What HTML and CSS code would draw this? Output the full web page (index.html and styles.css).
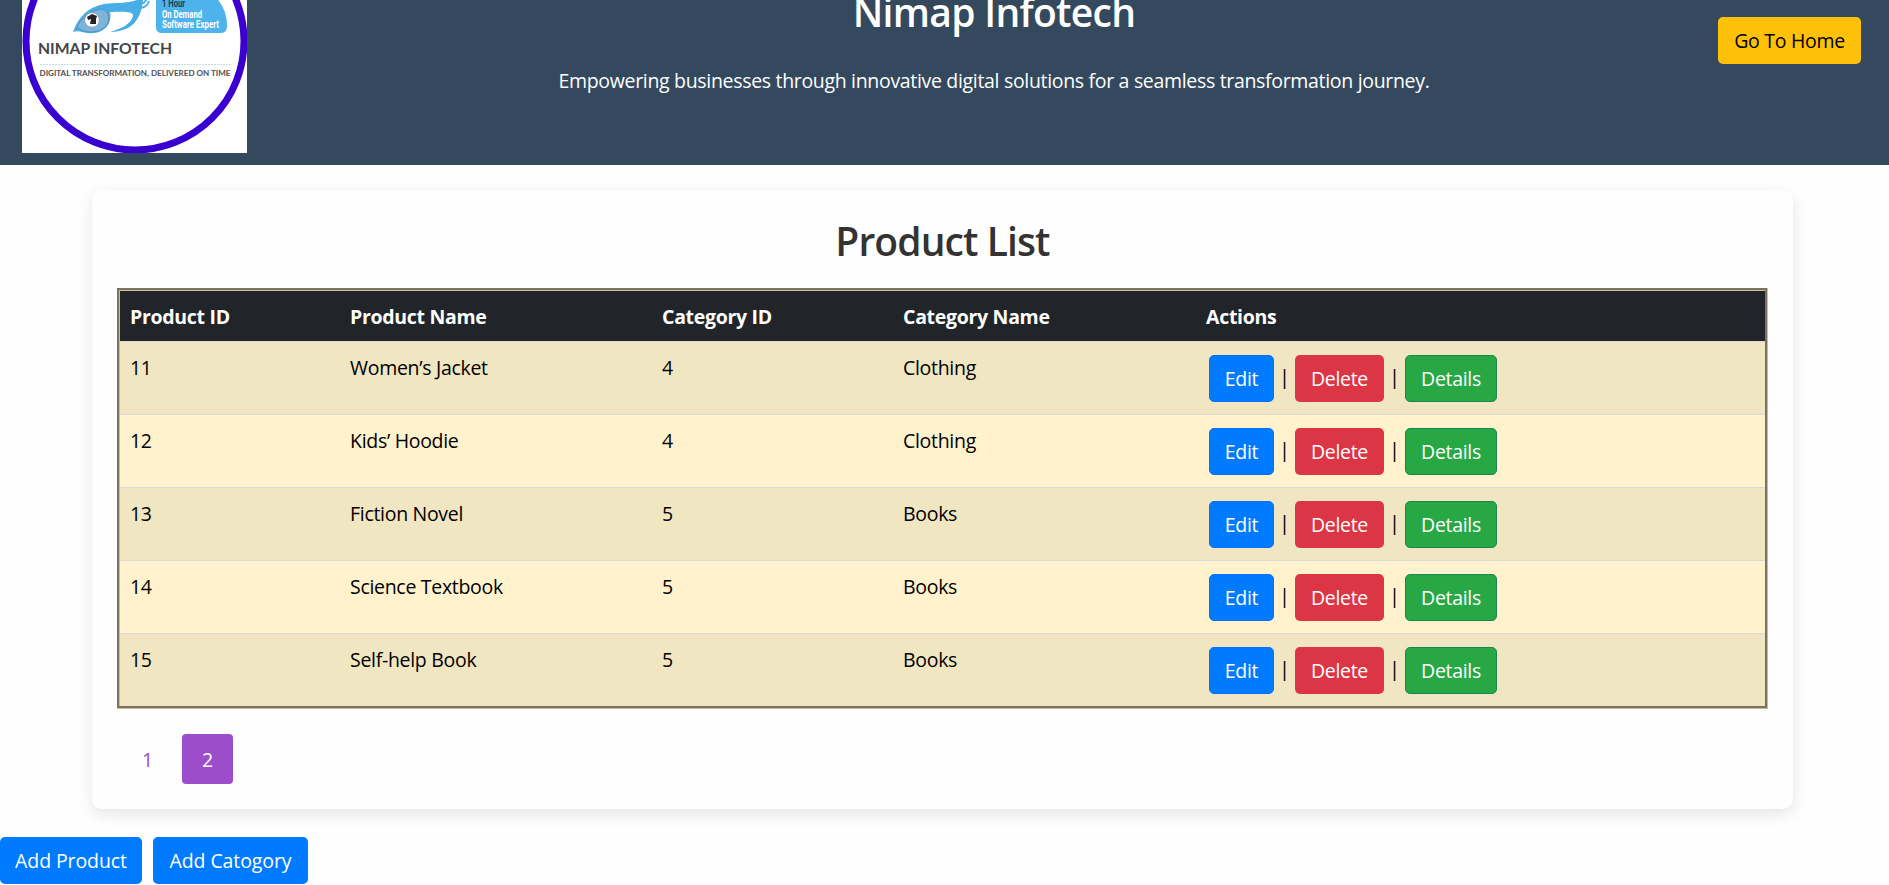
FILE: index.html
```html
<!DOCTYPE html>
<html lang="en">
<head>
<meta charset="utf-8">
<title>Product List</title>
<link rel="stylesheet" href="styles.css">
</head>
<body>
<header class="site-header">
  <svg class="logo" viewBox="0 0 225 225" role="img" aria-label="Nimap Infotech">
    <rect width="225" height="225" fill="#fff"/>
    <circle cx="113" cy="113" r="109" fill="#fff" stroke="#3a00cf" stroke-width="7"/>
    <path d="M51 104 C57 88 66 79 82 76 C96 74 110 77 122 68 C120 74 121 80 117 88 C112 99 101 104 88 104 C99 101 109 96 111 88 C112 84 105 83 88 84 C91 99 78 107 65 105 C60 104 56 102 51 104Z" fill="#49aee6"/>
    <path d="M54 101 C59 90 67 84 78 81 C86 81 90 91 84 98 C78 105 63 106 57 100Z" fill="#7db4da" stroke="#5b8fbd"/>
    <path d="M117 80 Q125 80 127 73 M119 76 Q125 74 125 68" fill="none" stroke="#49aee6" stroke-width="1.8"/>
    <circle cx="70" cy="92" r="7.3" fill="#fff" stroke="#8b96a5" stroke-width=".7"/>
    <path d="M65 89 L70 86 L75 88 L74 91 L74 96 L68 96 L69 91 L66 92Z" fill="#272225"/>
    <path d="M134 66 H190 Q205 78 205 98 Q205 105 199 105 H140 Q134 105 134 99Z" fill="#4db3ea"/>
    <text class="logo-tag logo-tag-dark" x="140" y="78.5" textLength="23" lengthAdjust="spacingAndGlyphs">1 Hour</text>
    <text class="logo-tag" x="140" y="89.5" textLength="40" lengthAdjust="spacingAndGlyphs">On Demand</text>
    <text class="logo-tag" x="140" y="100" textLength="57" lengthAdjust="spacingAndGlyphs">Software Expert</text>
    <text class="logo-name" x="16" y="125.500" textLength="134" lengthAdjust="spacingAndGlyphs">NIMAP INFOTECH</text>
    <path d="M18 136.500H209" stroke="#bfe0dc" stroke-dasharray="2 1"/>
    <text class="logo-line" x="17.500" y="148" textLength="191" lengthAdjust="spacingAndGlyphs">DIGITAL TRANSFORMATION, DELIVERED ON TIME</text>
  </svg>
  <div class="brand">
    <h1 class="brand-title">Nimap Infotech</h1>
    <p class="brand-tagline">Empowering businesses through innovative digital solutions for a seamless transformation journey.</p>
  </div>
  <a class="btn btn-home">Go To Home</a>
</header>

<main class="card">
  <h2 class="card-title">Product List</h2>
  <div class="table-edge"><div class="table-frame">
  <table class="products">
    <colgroup><col class="col-id"><col class="col-name"><col class="col-cat-id"><col class="col-cat-name"><col></colgroup>
    <thead>
      <tr><th>Product ID</th><th>Product Name</th><th>Category ID</th><th>Category Name</th><th>Actions</th></tr>
    </thead>
    <tbody>
      <tr><td>11</td><td>Women’s Jacket</td><td>4</td><td>Clothing</td><td><div class="actions"><a class="btn btn-edit">Edit</a><span class="sep">|</span><a class="btn btn-delete">Delete</a><span class="sep">|</span><a class="btn btn-details">Details</a></div></td></tr>
      <tr><td>12</td><td>Kids’ Hoodie</td><td>4</td><td>Clothing</td><td><div class="actions"><a class="btn btn-edit">Edit</a><span class="sep">|</span><a class="btn btn-delete">Delete</a><span class="sep">|</span><a class="btn btn-details">Details</a></div></td></tr>
      <tr><td>13</td><td>Fiction Novel</td><td>5</td><td>Books</td><td><div class="actions"><a class="btn btn-edit">Edit</a><span class="sep">|</span><a class="btn btn-delete">Delete</a><span class="sep">|</span><a class="btn btn-details">Details</a></div></td></tr>
      <tr><td>14</td><td>Science Textbook</td><td>5</td><td>Books</td><td><div class="actions"><a class="btn btn-edit">Edit</a><span class="sep">|</span><a class="btn btn-delete">Delete</a><span class="sep">|</span><a class="btn btn-details">Details</a></div></td></tr>
      <tr><td>15</td><td>Self-help Book</td><td>5</td><td>Books</td><td><div class="actions"><a class="btn btn-edit">Edit</a><span class="sep">|</span><a class="btn btn-delete">Delete</a><span class="sep">|</span><a class="btn btn-details">Details</a></div></td></tr>
    </tbody>
  </table>
  </div></div>
  <nav class="pagination">
    <a class="page">1</a>
    <a class="page page-active">2</a>
  </nav>
</main>

<div class="add-actions">
  <a class="btn btn-add-product">Add Product</a>
  <a class="btn btn-add-category">Add Catogory</a>
</div>
</body>
</html>
```

FILE: styles.css
```css
* { box-sizing: border-box; }
body {
  margin: 0;
  height: 885px;
  overflow: hidden;
  background: #fefefe;
  color: #000;
  font: 19.5px/30px "Segoe UI", "Open Sans", "Noto Sans", sans-serif;
  letter-spacing: -0.3px;
}

/* Header */
.site-header {
  display: flex;
  align-items: flex-start;
  height: 165px;
  padding: 0 28px 0 22px;
  overflow: hidden;
  background: #34495e;
  color: #fff;
}
.logo { flex: none; width: 225px; height: 225px; margin-top: -72px; }
.logo text { letter-spacing: 0; }
.logo-tag { font: 700 10px "Roboto", sans-serif; fill: #fff; }
.logo-tag-dark { fill: #1d3c58; }
.logo-name { font: 700 16px Lato, sans-serif; fill: #454547; }
.logo-line { font: 700 7.8px Lato, sans-serif; fill: #505052; }
.brand { flex: 1; text-align: center; padding-left: 23px; }
.brand-title { margin: -12px 0 0; font-size: 39px; line-height: 48px; font-weight: 600; letter-spacing: -0.7px; }
.brand-tagline { margin: 30px 0 0; white-space: nowrap; letter-spacing: -0.32px; }

.btn {
  display: flex;
  flex: none;
  align-items: center;
  justify-content: center;
  height: 47px;
  border: 1px solid transparent;
  border-radius: 5px;
  color: #fff;
  white-space: nowrap;
}
.btn-home { width: 143px; margin-top: 17px; background: #ffc107; color: #000; }

/* Card */
.card {
  width: 1701px;
  height: 619px;
  margin: 25px 0 0 92px;
  padding: 25px;
  border-radius: 10px;
  background: #fefefe;
  box-shadow: 0 5px 15px rgba(0, 0, 0, 0.1);
}
.card-title {
  margin: 0;
  padding-top: 2px;
  height: 73px;
  color: #333;
  font-size: 39px;
  font-weight: 600;
  line-height: 48px;
  letter-spacing: -0.9px;
  text-align: center;
}
.table-edge { border: solid #c8be9c; border-width: 0 1px 1px 0; }
.table-frame { border: 2px solid #7b735f; }
.products {
  width: 100%;
  table-layout: fixed;
  border-spacing: 0;
  border: solid #c8be9c;
  border-width: 1px 0 0 1px;
}
.col-id { width: 220px; }
.col-name { width: 312px; }
.col-cat-id { width: 241px; }
.col-cat-name { width: 303px; }
.products th {
  height: 50px;
  padding: 11px 9px 9px 10px;
  background: #212529;
  color: #fff;
  font-weight: 700;
  text-align: left;
}
.products td {
  height: 73px;
  padding: 11px 10px 9px;
  border-top: 1px solid #dcdad6;
  background: #fff2cd;
  vertical-align: top;
}
.products tbody tr:nth-child(odd) td { background: #f1e6c2; }
.actions { display: flex; align-items: flex-start; padding: 2px 0 0 3px; height: 49px; }
.sep { width: 21px; margin-top: 7px; font-size: 20px; text-align: center; letter-spacing: 0; }
.actions .btn { padding-top: 1px; }
.btn-edit { width: 65px; background: #007bff; border-color: #0d6efd; }
.btn-delete { width: 89px; background: #dc3545; }
.btn-details { width: 92px; background: #28a745; border-color: #198754; }

.pagination { display: flex; gap: 9px; padding: 25px 0 0 5px; }
.page {
  width: 51px;
  height: 50px;
  border-radius: 4px;
  color: #9b4dca;
  line-height: 52px;
  text-align: center;
}
.page-active { background: #9b4dca; color: #fff; }

.add-actions { display: flex; gap: 11px; margin-top: 28px; letter-spacing: -0.1px; }
.btn-add-product { width: 142px; background: #007bff; }
.btn-add-category { width: 155px; background: #007bff; }
```
